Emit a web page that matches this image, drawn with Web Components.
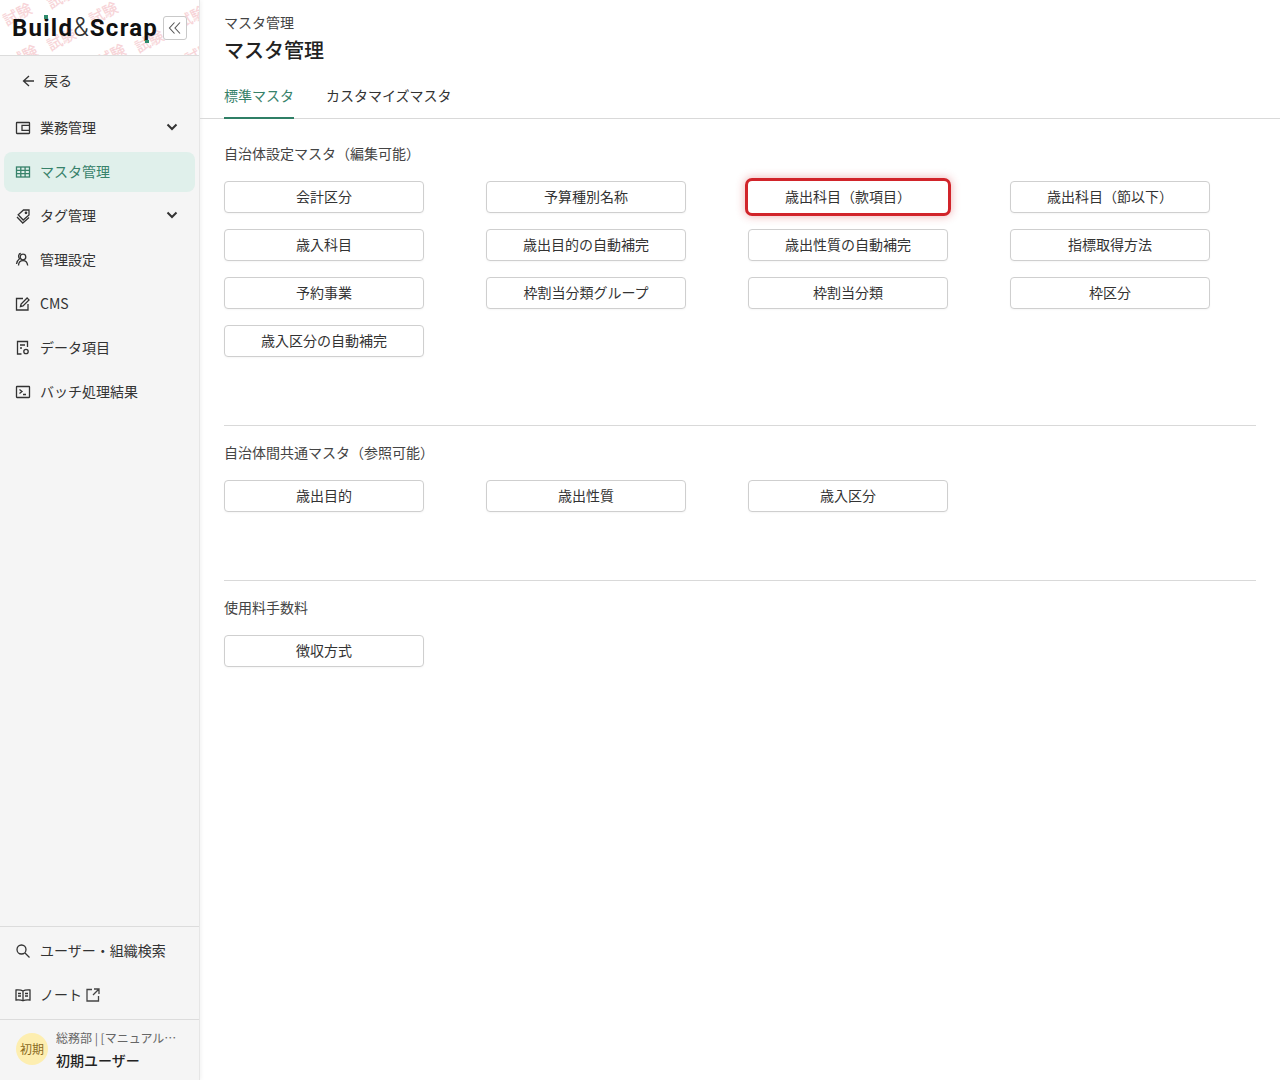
<!DOCTYPE html>
<html lang="ja">
<head>
<meta charset="utf-8">
<title>マスタ管理</title>
<style>
    html, body { margin: 0; height: 100%; }
    body {
        font-family: "Noto Sans CJK JP", "Noto Sans", sans-serif;
        color: #333;
        background: #fff;
    }
    app-shell { height: 1080px; }
</style>
</head>
<body>
<app-shell>
    <side-bar slot="side">
        <brand-head slot="head"></brand-head>
        <nav-item label="戻る" icon="back"></nav-item>
        <nav-item label="業務管理" icon="wallet" chevron></nav-item>
        <nav-item label="マスタ管理" icon="table" active></nav-item>
        <nav-item label="タグ管理" icon="tag" chevron></nav-item>
        <nav-item label="管理設定" icon="users"></nav-item>
        <nav-item label="CMS" icon="edit"></nav-item>
        <nav-item label="データ項目" icon="doc"></nav-item>
        <nav-item label="バッチ処理結果" icon="terminal"></nav-item>
        <nav-item slot="foot" label="ユーザー・組織検索" icon="search"></nav-item>
        <nav-item slot="foot" label="ノート" icon="book" external></nav-item>
        <user-card slot="user"></user-card>
    </side-bar>
    <page-head></page-head>
    <master-section heading="自治体設定マスタ（編集可能）" style="height:282px">
        <master-button>会計区分</master-button>
        <master-button>予算種別名称</master-button>
        <master-button alert>歳出科目（款項目）</master-button>
        <master-button>歳出科目（節以下）</master-button>
        <master-button>歳入科目</master-button>
        <master-button>歳出目的の自動補完</master-button>
        <master-button>歳出性質の自動補完</master-button>
        <master-button>指標取得方法</master-button>
        <master-button>予約事業</master-button>
        <master-button>枠割当分類グループ</master-button>
        <master-button>枠割当分類</master-button>
        <master-button>枠区分</master-button>
        <master-button>歳入区分の自動補完</master-button>
    </master-section>
    <master-section heading="自治体間共通マスタ（参照可能）" divided style="height:138px">
        <master-button>歳出目的</master-button>
        <master-button>歳出性質</master-button>
        <master-button>歳入区分</master-button>
    </master-section>
    <master-section heading="使用料手数料" divided>
        <master-button>徴収方式</master-button>
    </master-section>
</app-shell>

<script>
const ICONS = {
    back: '<path d="M12 5l-5.500 5 5.500 5M6.500 10H17"/>',
    wallet: '<rect x="3.500" y="4.500" width="13" height="11" rx=".5"/><path d="M16.500 7.300H9v5h7.500"/>',
    table: '<rect x="3.500" y="5" width="13" height="10"/><path d="M3.500 8.300h13M3.500 11.600h13M7.800 5v10M12.100 5v10"/>',
    tag: '<path d="M10.500 4h5.500v5l-5.800 5-5-5.200z"/><path d="M4 11l5.800 6 6.200-5.500"/><circle cx="13" cy="6.800" r=".7"/>',
    users: '<circle cx="10" cy="7" r="2.800"/><path d="M5.500 15.500c.2-3 2-4.800 4.500-4.800s4.300 1.800 4.700 4.800M7.800 3.500C5.500 3.500 5 6.800 6.500 8.700 5 9.800 3.800 11.500 3.500 14"/>',
    edit: '<path d="M10 4.500H3.500v11.500h11.500V10"/><path d="M7.500 12.500l.6-2.500 6-6 1.900 1.900-6 6z"/>',
    doc: '<path d="M8.500 16H4.500V3.500h10v5.500"/><path d="M7 7h5M7 10h2"/><circle cx="13" cy="13.500" r="2.200"/>',
    terminal: '<rect x="3.500" y="4.500" width="13" height="11" rx=".5"/><path d="M6.500 7.500l2.500 2-2.500 2M10 12.500h3"/>',
    search: '<circle cx="8.500" cy="8.500" r="4.500"/><path d="M12 12l4.500 4.500"/>',
    book: '<path d="M10 6c-1.500-1-4-1.200-7-1v10c3-.2 5.500 0 7 .8 1.500-.8 4-1 7-.8V5c-3-.2-5.500 0-7 1zM10 6v9.500M5 8.500h3M5 11h3M12 8.500h3M12 11h3"/>'
};

const shellTemplate = document.createElement('template');
shellTemplate.innerHTML = `
    <style>
        :host { display: flex; width: 100%; }
        main { flex: 1; min-width: 0; }
    </style>
    <slot name="side"></slot>
    <main><slot></slot></main>
`;

class AppShell extends HTMLElement {
    constructor () {
        super();
        this.attachShadow({ mode: 'open' }).appendChild(shellTemplate.content.cloneNode(true));
    }
}

const sideTemplate = document.createElement('template');
sideTemplate.innerHTML = `
    <style>
        :host {
            display: flex;
            flex-direction: column;
            width: 200px;
            height: 1080px;
            flex: none;
            box-sizing: border-box;
            background: #f5f5f5;
            border-right: 1px solid #e6e6e6;
            box-shadow: 1px 0 4px rgba(0,0,0,.06);
        }
        .nav { flex: 1; }
        .foot { border-top: 1px solid #dcdcdc; padding-top: 2px; height: 93px; box-sizing: border-box; }
        .user { border-top: 1px solid #dcdcdc; }
    </style>
    <slot name="head"></slot>
    <div class="nav"><slot></slot></div>
    <div class="foot"><slot name="foot"></slot></div>
    <div class="user"><slot name="user"></slot></div>
`;

class SideBar extends HTMLElement {
    constructor () {
        super();
        this.attachShadow({ mode: 'open' }).appendChild(sideTemplate.content.cloneNode(true));
    }
}

const brandTemplate = document.createElement('template');
brandTemplate.innerHTML = `
    <style>
        :host {
            display: flex;
            align-items: center;
            position: relative;
            overflow: hidden;
            height: 56px;
            box-sizing: border-box;
            background: #fff;
            border-bottom: 1px solid #dcdcdc;
            padding: 0 12px;
        }
        .marks {
            position: absolute;
            inset: 0;
            color: #f5c3c8;
            font-size: 15px;
            font-weight: 500;
            opacity: .7;
            pointer-events: none;
        }
        .marks span { position: absolute; transform: rotate(-28deg); white-space: nowrap; }
        .logo {
            position: relative;
            font: 700 24px/1 Roboto, sans-serif;
            color: #111;
            letter-spacing: 1.250px;
            flex: 1;
            white-space: nowrap;
        }
        .logo i { font: 300 25px/1 Inter, sans-serif; color: #333; margin: 0 1px 0 0; letter-spacing: 0; }
        .dot { position: absolute; width: 4px; height: 4px; background: #2f8a6c; }
        button {
            position: relative;
            width: 24px;
            height: 24px;
            padding: 0;
            background: #fff;
            border: 1px solid #c9c9c9;
            border-radius: 3px;
            display: flex;
            align-items: center;
            justify-content: center;
        }
    </style>
    <div class="marks">
        <span style="left:2px;top:3px">試験</span>
        <span style="left:88px;top:2px">試験</span>
        <span style="left:176px;top:6px">試験</span>
        <span style="left:46px;top:-14px">試験</span>
        <span style="left:134px;top:30px">試験</span>
        <span style="left:46px;top:28px">試験</span>
        <span style="left:8px;top:45px">試験</span>
        <span style="left:96px;top:44px">試験</span>
        <span style="left:184px;top:42px">試験</span>
    </div>
    <div class="logo">Build<i>&amp;</i>Scrap<span class="dot" style="left:32px;top:0"></span><span class="dot" style="left:133px;top:25px;height:3px"></span></div>
    <button aria-label="閉じる">
        <svg width="16" height="16" viewBox="0 0 16 16" fill="none" stroke="#555" stroke-width="1.100"><path d="M7.500 2.500L2.500 8l5 5.500M13 2.500L8 8l5 5.500"/></svg>
    </button>
`;

class BrandHead extends HTMLElement {
    constructor () {
        super();
        this.attachShadow({ mode: 'open' }).appendChild(brandTemplate.content.cloneNode(true));
    }
}

class NavItem extends HTMLElement {
    constructor () {
        super();
        this.attachShadow({ mode: 'open' });
    }

    connectedCallback () {
        const name = this.getAttribute('icon');
        const isBack = name === 'back';
        const active = this.hasAttribute('active');
        const chevron = this.hasAttribute('chevron')
            ? `<svg class="chev" width="14" height="14" viewBox="0 0 14 14" fill="none" stroke="#333" stroke-width="2"><path d="M2.500 4.500L7 9l4.500-4.500"/></svg>` : '';
        const external = this.hasAttribute('external')
            ? `<svg class="ext" width="16" height="16" viewBox="0 0 16 16" fill="none" stroke="#444" stroke-width="1.300"><path d="M7 2.500H2v11.500h11.500V9M9 2h5v5M14 2L8 8"/></svg>` : '';
        this.shadowRoot.innerHTML = `
            <style>
                :host {
                    display: block;
                    height: ${isBack ? 50 : 44}px;
                    padding: ${isBack ? 5 : 2}px 4px;
                    box-sizing: border-box;
                }
                .row {
                    display: flex;
                    align-items: center;
                    height: 40px;
                    padding-left: ${isBack ? 13 : 9}px;
                    padding-right: 16px;
                    border-radius: 8px;
                    font-size: 14px;
                    color: ${active ? '#37826a' : '#333'};
                    background: ${active ? '#e0f0eb' : 'transparent'};
                    white-space: nowrap;
                }
                svg.icon { flex: none; margin-right: 7px; }
                span { padding-bottom: 2px; }
                .chev { margin-left: auto; margin-top: -2px; }
                .ext { margin-left: 3px; }
            </style>
            <div class="row">
                <svg class="icon" width="20" height="20" viewBox="0 0 20 20" fill="none" stroke="${active ? '#37826a' : '#333'}" stroke-width="1.300">${ICONS[name]}</svg>
                <span>${this.getAttribute('label')}</span>
                ${external}${chevron}
            </div>
        `;
    }
}

const userTemplate = document.createElement('template');
userTemplate.innerHTML = `
    <style>
        :host {
            display: flex;
            align-items: center;
            height: 60px;
            box-sizing: border-box;
            padding: 0 0 2px 16px;
            gap: 8px;
        }
        .avatar {
            width: 32px;
            height: 32px;
            flex: none;
            box-sizing: border-box;
            padding-bottom: 1px;
            border-radius: 50%;
            background: #fdeeb0;
            color: #8a6a1e;
            font-size: 12px;
            display: flex;
            align-items: center;
            justify-content: center;
        }
        .info { min-width: 0; width: 124px; }
        .org {
            font-size: 12px;
            line-height: 18px;
            color: #666;
            white-space: nowrap;
            overflow: hidden;
            text-overflow: ellipsis;
        }
        .name { font-size: 14px; line-height: 20px; margin-top: 3px; font-weight: 500; color: #222; }
    </style>
    <div class="avatar">初期</div>
    <div class="info">
        <div class="org">総務部 | [マニュアル用テスト]</div>
        <div class="name">初期ユーザー</div>
    </div>
`;

class UserCard extends HTMLElement {
    constructor () {
        super();
        this.attachShadow({ mode: 'open' }).appendChild(userTemplate.content.cloneNode(true));
    }
}

const headTemplate = document.createElement('template');
headTemplate.innerHTML = `
    <style>
        :host {
            display: block;
            height: 119px;
            box-sizing: border-box;
            padding: 12px 24px 0;
            border-bottom: 1px solid #d9d9d9;
        }
        .crumb { font-size: 14px; line-height: 20px; color: #444; }
        h1 { margin: 4px 0 0; font-size: 20px; line-height: 28px; font-weight: 500; color: #222; }
        .tabs { display: flex; gap: 32px; margin-top: 21px; }
        .tab { font-size: 14px; line-height: 20px; height: 34px; box-sizing: border-box; color: #333; }
        .tab.on { color: #37826a; border-bottom: 2px solid #2f7f66; }
    </style>
    <div class="crumb">マスタ管理</div>
    <h1>マスタ管理</h1>
    <div class="tabs">
        <div class="tab on">標準マスタ</div>
        <div class="tab">カスタマイズマスタ</div>
    </div>
`;

class PageHead extends HTMLElement {
    constructor () {
        super();
        this.attachShadow({ mode: 'open' }).appendChild(headTemplate.content.cloneNode(true));
    }
}

class MasterSection extends HTMLElement {
    constructor () {
        super();
        this.attachShadow({ mode: 'open' });
    }

    connectedCallback () {
        const divided = this.hasAttribute('divided');
        this.shadowRoot.innerHTML = `
            <style>
                :host {
                    display: block;
                    margin: 0 24px;
                    padding-top: ${divided ? 16 : 24}px;
                    ${divided ? 'border-top: 1px solid #d9d9d9;' : ''}
                }
                h2 { margin: 0; font-size: 14px; line-height: 20px; font-weight: 400; color: #444; }
                .grid {
                    display: grid;
                    grid-template-columns: repeat(4, 200px);
                    column-gap: 62px;
                    row-gap: 16px;
                    margin-top: 18px;
                }
            </style>
            <h2>${this.getAttribute('heading')}</h2>
            <div class="grid"><slot></slot></div>
        `;
    }
}

const buttonTemplate = document.createElement('template');
buttonTemplate.innerHTML = `
    <style>
        :host { display: block; height: 32px; }
        button {
            display: block;
            width: 100%;
            height: 32px;
            padding: 0 0 2px;
            font: 400 14px/20px "Noto Sans CJK JP", "Noto Sans", sans-serif;
            color: #333;
            background: #fff;
            border: 1px solid #cfcfcf;
            border-radius: 4px;
            box-shadow: 0 1px 2px rgba(0,0,0,.04);
        }
        :host([alert]) button {
            outline: 3px solid #d1242a;
            outline-offset: 0;
            border-color: transparent;
            box-shadow: 0 0 8px 4px rgba(209,36,42,.3);
        }
    </style>
    <button type="button"><slot></slot></button>
`;

class MasterButton extends HTMLElement {
    constructor () {
        super();
        this.attachShadow({ mode: 'open' }).appendChild(buttonTemplate.content.cloneNode(true));
    }
}

customElements.define('app-shell', AppShell);
customElements.define('side-bar', SideBar);
customElements.define('brand-head', BrandHead);
customElements.define('nav-item', NavItem);
customElements.define('user-card', UserCard);
customElements.define('page-head', PageHead);
customElements.define('master-section', MasterSection);
customElements.define('master-button', MasterButton);
</script>
</body>
</html>
